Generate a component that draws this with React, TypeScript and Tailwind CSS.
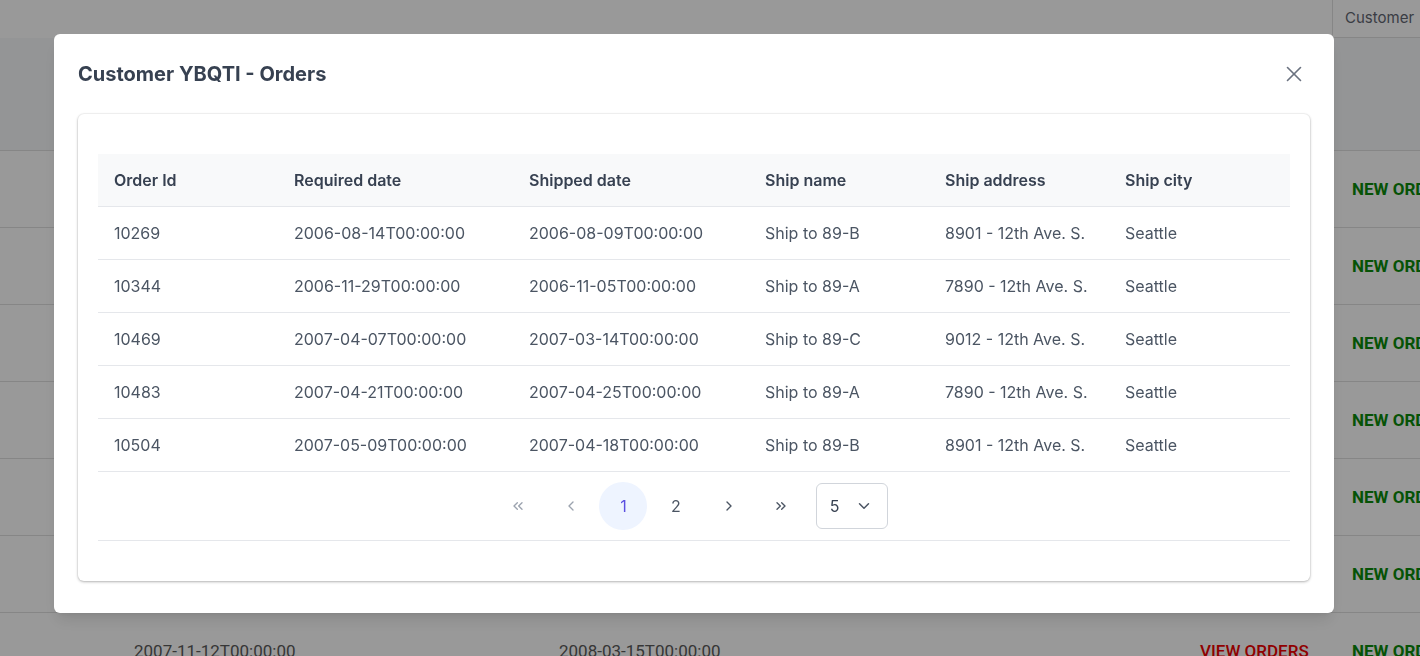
import React from 'react';
import { X, ChevronLeft, ChevronRight, ChevronsLeft, ChevronsRight, ChevronDown } from 'lucide-react';

interface Order {
  id: number;
  required: string;
  shipped: string;
  shipName: string;
  address: string;
  city: string;
}

const ORDERS: Order[] = [
  { id: 10269, required: '2006-08-14T00:00:00', shipped: '2006-08-09T00:00:00', shipName: 'Ship to 89-B', address: '8901 - 12th Ave. S.', city: 'Seattle' },
  { id: 10344, required: '2006-11-29T00:00:00', shipped: '2006-11-05T00:00:00', shipName: 'Ship to 89-A', address: '7890 - 12th Ave. S.', city: 'Seattle' },
  { id: 10469, required: '2007-04-07T00:00:00', shipped: '2007-03-14T00:00:00', shipName: 'Ship to 89-C', address: '9012 - 12th Ave. S.', city: 'Seattle' },
  { id: 10483, required: '2007-04-21T00:00:00', shipped: '2007-04-25T00:00:00', shipName: 'Ship to 89-A', address: '7890 - 12th Ave. S.', city: 'Seattle' },
  { id: 10504, required: '2007-05-09T00:00:00', shipped: '2007-04-18T00:00:00', shipName: 'Ship to 89-B', address: '8901 - 12th Ave. S.', city: 'Seattle' },
];

// rows of the customers page behind the dialog
const CUSTOMER_ROWS = [
  ['2007-01-16T00:00:00', '2007-06-02T00:00:00'],
  ['2007-02-10T00:00:00', '2007-07-19T00:00:00'],
  ['2007-03-22T00:00:00', '2007-08-30T00:00:00'],
  ['2007-05-04T00:00:00', '2007-10-11T00:00:00'],
  ['2007-07-15T00:00:00', '2007-12-01T00:00:00'],
  ['2007-09-28T00:00:00', '2008-01-24T00:00:00'],
  ['2007-11-12T00:00:00', '2008-03-15T00:00:00'],
];

const COLS = ['w-[180px]', 'w-[235px]', 'w-[236px]', 'w-[180px]', 'w-[180px]', ''];

const BackgroundPage: React.FC = () => (
  <div className="h-[656px] overflow-hidden bg-white font-['Roboto',sans-serif]">
    <div className="flex h-[38px]">
      <div className="w-[1332px] shrink-0" />
      <div className="flex-1 border-l border-b border-[#e0e0e0] pl-[12px] pt-[7px] font-['Inter',sans-serif] text-[15px] text-[#5f6672]">
        Customer
      </div>
    </div>
    <div className="h-[112px] bg-[#f7f8fa]" />
    {CUSTOMER_ROWS.map((row, i) => (
      <div key={i} className="flex h-[77px] items-center whitespace-nowrap border-t border-[#e0e0e0] pt-[2px] text-[17px]">
        <div className="w-[134px] shrink-0" />
        <div className="w-[425px] shrink-0 text-[#5a5a5a]">{row[0]}</div>
        <div className="w-[641px] shrink-0 text-[#5a5a5a]">{row[1]}</div>
        <div className="w-[152px] shrink-0 font-medium text-[#f00000]">VIEW ORDERS</div>
        <div className="shrink-0 font-bold text-[#0a8a0a]">NEW ORDER</div>
      </div>
    ))}
  </div>
);

const PageButton: React.FC<{ active?: boolean; children: React.ReactNode }> = ({ active, children }) => (
  <button
    className={
      active
        ? 'flex h-12 w-12 items-center justify-center rounded-full bg-[#eef4ff] text-[16px] text-[#5b4fe0]'
        : 'flex h-12 w-12 items-center justify-center rounded-full text-[16px] text-[#4b5563]'
    }
  >
    {children}
  </button>
);

const OrdersDialog: React.FC = () => (
  <div className="fixed inset-0 bg-black/40 pl-[54px] pt-[34px]">
    <div className="flex w-[1280px] flex-col rounded-md bg-white px-6 pb-8 font-['Inter',sans-serif] shadow-lg">
      <div className="flex h-[80px] shrink-0 items-center justify-between">
        <h2 className="text-[20px] font-bold text-[#374151]">Customer YBQTI - Orders</h2>
        <button className="mr-[3px] text-[#6b7280]">
          <X size={26} strokeWidth={1.5} />
        </button>
      </div>

      <div className="rounded-md bg-white px-5 pb-10 pt-10 shadow-[0_1px_3px_rgba(0,0,0,0.28),0_0_0_1px_rgba(0,0,0,0.03)]">
        <table className="w-full border-collapse text-left text-[16px]">
          <thead>
            <tr className="h-[52px] border-b border-[#e5e7eb] bg-[#f8f9fa]">
              {['Order Id', 'Required date', 'Shipped date', 'Ship name', 'Ship address', 'Ship city'].map((h, i) => (
                <th key={h} className={`${COLS[i]} px-4 font-semibold text-[#374151]`}>
                  {h}
                </th>
              ))}
            </tr>
          </thead>
          <tbody>
            {ORDERS.map(o => (
              <tr key={o.id} className="h-[53px] border-b border-[#e5e7eb] text-[#4b5563]">
                <td className="px-4">{o.id}</td>
                <td className="px-4">{o.required}</td>
                <td className="px-4">{o.shipped}</td>
                <td className="px-4">{o.shipName}</td>
                <td className="px-4">{o.address}</td>
                <td className="px-4">{o.city}</td>
              </tr>
            ))}
          </tbody>
        </table>

        <div className="flex h-[69px] items-center justify-center gap-[4.6px] border-b border-[#e5e7eb] pr-[6px]">
          <PageButton>
            <ChevronsLeft size={16} className="text-[#9ca3af]" />
          </PageButton>
          <PageButton>
            <ChevronLeft size={16} className="text-[#9ca3af]" />
          </PageButton>
          <PageButton active>1</PageButton>
          <PageButton>2</PageButton>
          <PageButton>
            <ChevronRight size={16} />
          </PageButton>
          <PageButton>
            <ChevronsRight size={16} />
          </PageButton>
          <div className="ml-[6px] flex h-[46px] w-[72px] items-center justify-between rounded-md border border-[#d1d5db] pl-[13px] pr-[14px] text-[16px] text-[#374151]">
            <span>5</span>
            <ChevronDown size={18} className="text-[#4b5563]" />
          </div>
        </div>
      </div>
    </div>
  </div>
);

export default function App() {
  return (
    <div className="relative">
      <BackgroundPage />
      <OrdersDialog />
    </div>
  );
}
